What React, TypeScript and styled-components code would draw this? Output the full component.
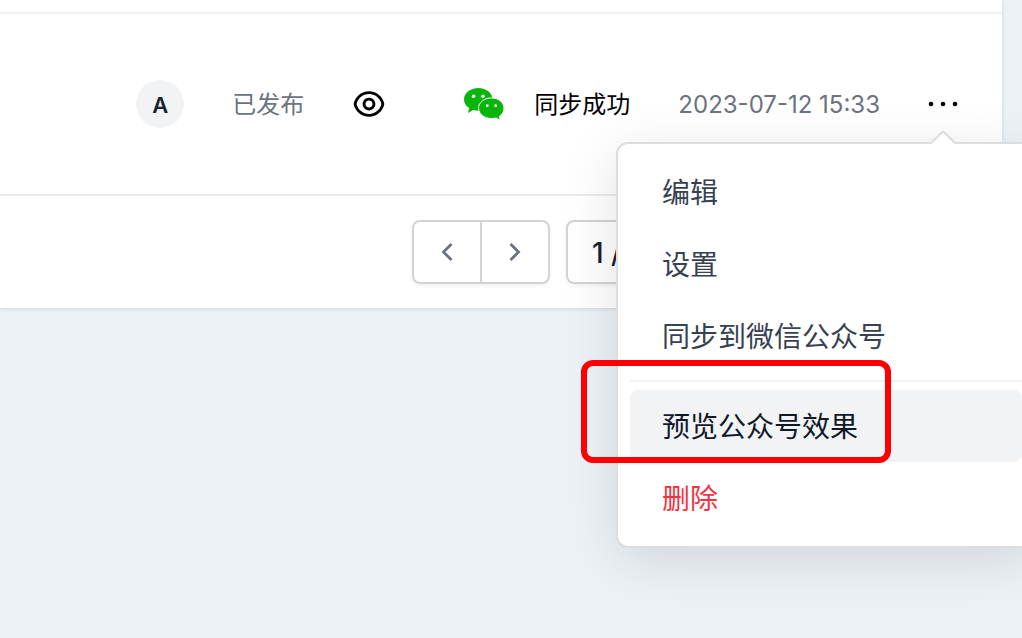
import React from "react";
import styled, { createGlobalStyle } from "styled-components";
import { RiEyeLine } from "react-icons/ri";

const GlobalStyle = createGlobalStyle`
  * { box-sizing: border-box; }
  body {
    margin: 0;
    min-height: 100vh;
    overflow: hidden;
    background: #edf2f6;
    color: #000;
    font-family: Inter, "Noto Sans CJK SC", sans-serif;
    font-size: 24px;
    line-height: 32px;
  }
  button { font: inherit; color: inherit; background: none; border: 0; padding: 0; }
`;

const Card = styled.main`
  margin-right: 20px;
  padding-top: 12px;
  background: #fff;
  box-shadow: 0 1px 4px rgba(0, 0, 0, 0.12);
`;

const Row = styled.section`
  display: flex;
  align-items: center;
  justify-content: flex-end;
  height: 184px;
  padding-right: 40px;
  border-top: 2px solid #f1f2f4;
  border-bottom: 2px solid #e9eaec;
`;

const Avatar = styled.span`
  display: flex;
  align-items: center;
  justify-content: center;
  width: 48px;
  height: 48px;
  padding-top: 2px;
  margin-right: 48px;
  border-radius: 50%;
  background: #f2f3f5;
  color: #1a2233;
  font-size: 22px;
  font-weight: 600;
`;

const Label = styled.span`
  padding-top: 2px;
`;

const Status = styled(Label)`
  margin-right: 48px;
  color: #6b7280;
`;

const Timestamp = styled.time`
  padding-top: 2px;
  margin-right: 44px;
  color: #6b7280;
`;

const IconButton = styled.button`
  display: flex;
  margin-right: 78px;
`;

const Sync = styled.span`
  display: flex;
  align-items: center;
  gap: 30px;
  margin-right: 48px;
`;

const Actions = styled.div`
  position: relative;
  display: flex;
`;

const MoreButton = styled.button`
  display: flex;
`;

const Menu = styled.div`
  position: absolute;
  top: 54px;
  right: -74px;
  z-index: 1;
  width: 420px;
  padding: 12px;
  border: 2px solid #dcdddf;
  border-radius: 12px;
  background: #fff;
  box-shadow: 0 12px 56px rgba(0, 0, 0, 0.12);
`;

const Caret = styled.svg`
  position: absolute;
  top: -14px;
  right: 79px;
`;

const MenuItem = styled.button<{ $active?: boolean; $danger?: boolean }>`
  display: block;
  width: 100%;
  height: 72px;
  padding: 2px 32px 0;
  border-radius: 8px;
  text-align: left;
  font-size: 28px;
  background: ${(p) => (p.$active ? "#f2f3f5" : "transparent")};
  color: ${(p) => (p.$danger ? "#f5333f" : p.$active ? "#111827" : "#374151")};
`;

const Divider = styled.hr`
  height: 2px;
  margin: 8px 0;
  border: 0;
  background: #f2f3f5;
`;

const Marked = styled.div`
  position: relative;
`;

const Outline = styled.span`
  position: absolute;
  top: -30px;
  bottom: -1px;
  left: -49px;
  width: 310px;
  border: 6px solid #fe0000;
  border-radius: 12px;
  pointer-events: none;
`;

const Footer = styled.footer`
  display: flex;
  justify-content: flex-end;
  gap: 16px;
  padding: 24px 276px 24px 24px;
`;

const Pager = styled.nav`
  display: flex;
  height: 64px;
  border: 2px solid #d1d3d7;
  border-radius: 8px;
  box-shadow: 0 2px 4px rgba(0, 0, 0, 0.06);
`;

const PageButton = styled.button`
  display: flex;
  align-items: center;
  justify-content: center;
  width: 66px;
  color: #6b7280;

  & + & {
    width: 68px;
    border-left: 2px solid #d1d3d7;
  }
`;

const PageSelect = styled.button`
  width: 160px;
  height: 64px;
  padding: 2px 24px 0;
  border: 2px solid #d1d3d7;
  border-radius: 8px;
  box-shadow: 0 2px 4px rgba(0, 0, 0, 0.06);
  color: #1a2233;
  font-size: 28px;
  font-weight: 500;
  text-align: left;
`;

function Chevron({ d }: { d: string }) {
  return (
    <svg width="24" height="24" viewBox="0 0 24 24" fill="none" stroke="currentColor" strokeWidth="2.8">
      <path d={d} />
    </svg>
  );
}

function WechatIcon() {
  return (
    <svg width="40" height="34" viewBox="0 -0.7 40 34" fill="#09b50a">
      <path d="M14.3 0.3C6.4 0.3 0 5.4 0 11.7c0 3.5 2 6.6 5.2 8.7L4 25.2l5.2-2.900c1.600.500 3.300.700 5.100.700 7.900 0 14.300-5.100 14.300-11.300S22.200.3 14.300.3z" />
      <path
        d="M27.500 10.200c-7.200 0-13 4.600-13 10.300s5.800 10.300 13 10.300c1.600 0 3.100-.2 4.500-.6l4.400 2.700-1.100-4.200c3-1.900 4.700-4.800 4.700-8.200 0-5.700-5.400-10.300-12.500-10.300z"
        stroke="#fff"
        strokeWidth="1"
      />
      <g fill="#fff">
        <circle cx="9.600" cy="8.500" r="1.800" />
        <circle cx="19" cy="8.500" r="1.800" />
        <circle cx="23.300" cy="18" r="1.400" />
        <circle cx="31.700" cy="18" r="1.400" />
      </g>
    </svg>
  );
}

export default function App() {
  return (
    <>
      <GlobalStyle />
      <Card>
        <Row>
          <Avatar>A</Avatar>
          <Status>已发布</Status>
          <IconButton aria-label="查看">
            <RiEyeLine size={34} />
          </IconButton>
          <Sync>
            <WechatIcon />
            <Label>同步成功</Label>
          </Sync>
          <Timestamp dateTime="2023-07-12T15:33">2023-07-12 15:33</Timestamp>
          <Actions>
            <MoreButton aria-label="更多" aria-haspopup="menu" aria-expanded="true">
              <svg width="38" height="32" viewBox="0 0 38 32" fill="currentColor">
                <circle cx="7" cy="16" r="2.3" />
                <circle cx="19" cy="16" r="2.3" />
                <circle cx="31" cy="16" r="2.3" />
              </svg>
            </MoreButton>
            <Menu role="menu">
              <Caret width="24" height="14" viewBox="0 0 24 14">
                <path d="M0 14L12 2L24 14Z" fill="#fff" />
                <path d="M0 13L12 1.5L24 13" fill="none" stroke="#dcdddf" strokeWidth="2" />
              </Caret>
              <MenuItem role="menuitem">编辑</MenuItem>
              <MenuItem role="menuitem">设置</MenuItem>
              <MenuItem role="menuitem">同步到微信公众号</MenuItem>
              <Divider />
              <Marked>
                <MenuItem role="menuitem" $active>预览公众号效果</MenuItem>
                <Outline />
              </Marked>
              <MenuItem role="menuitem" $danger>删除</MenuItem>
            </Menu>
          </Actions>
        </Row>
        <Footer>
          <Pager aria-label="分页">
            <PageButton aria-label="上一页"><Chevron d="M16.500 4L8.500 12L16.500 20" /></PageButton>
            <PageButton aria-label="下一页"><Chevron d="M7.500 4L15.500 12L7.500 20" /></PageButton>
          </Pager>
          <PageSelect>1 / 1</PageSelect>
        </Footer>
      </Card>
    </>
  );
}
